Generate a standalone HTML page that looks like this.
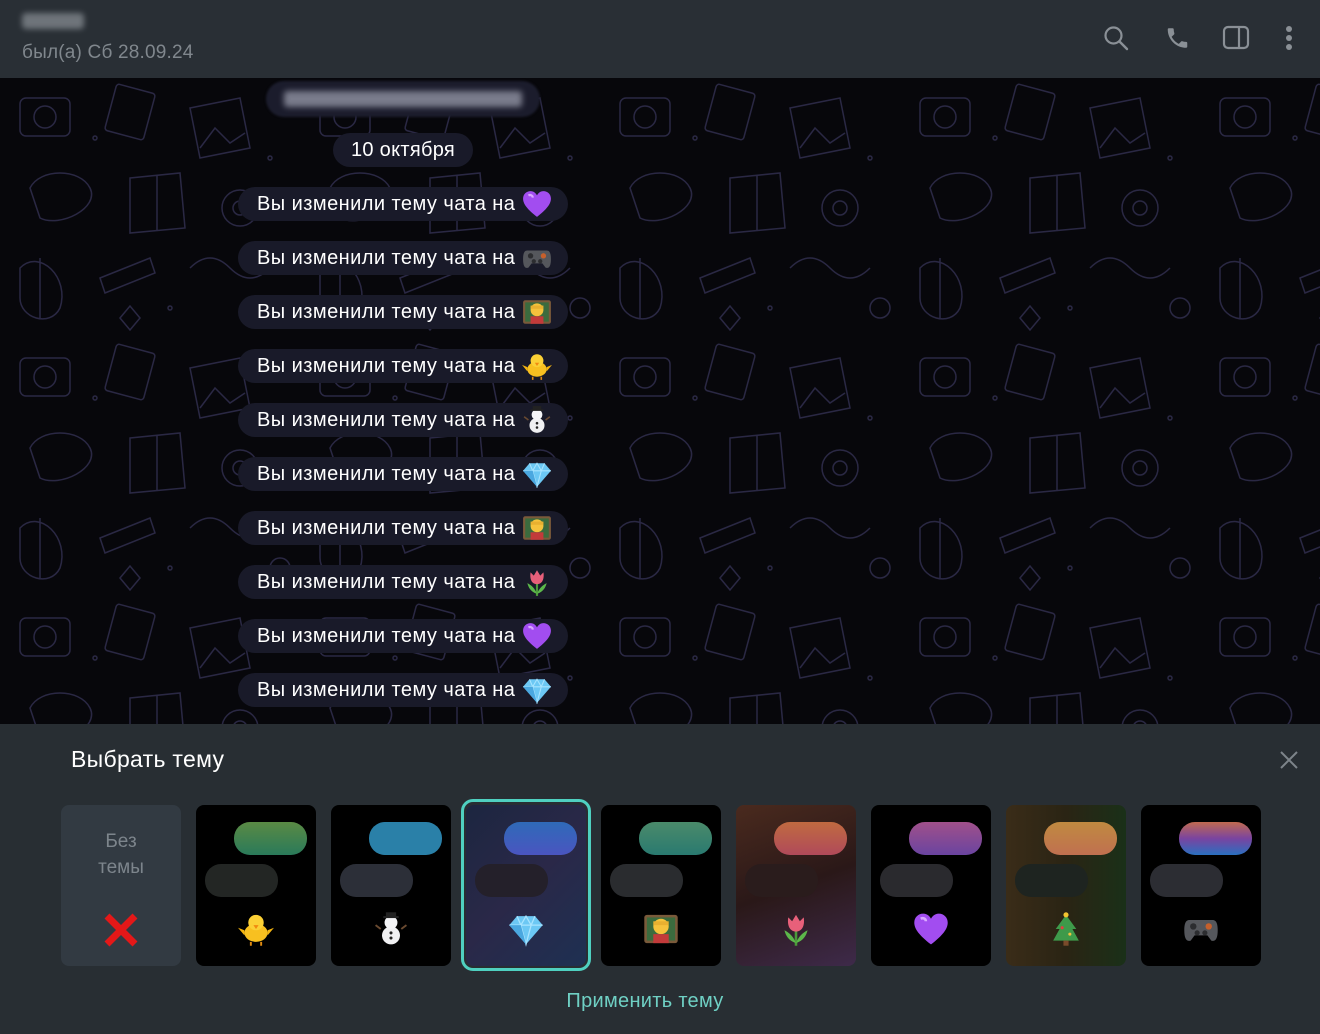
<!DOCTYPE html>
<html><head><meta charset="utf-8"><style>
*{margin:0;padding:0;box-sizing:border-box}
body{width:1320px;height:1034px;overflow:hidden;background:#282e33;font-family:"Liberation Sans","DejaVu Sans",sans-serif;position:relative}
.hdr{position:absolute;left:0;top:0;width:1320px;height:78px;background:#292f35}
.name{position:absolute;left:22px;top:13px;width:62px;height:16px;background:#80868c;filter:blur(3px);border-radius:4px;opacity:.8}
.status{position:absolute;left:22px;top:42px;color:#80878d;font-size:19px;letter-spacing:.2px}
.chat{position:absolute;left:0;top:78px;width:1320px;height:646px;background:#07070b;overflow:hidden}
.pill{position:absolute;left:238px;width:330px;height:34px;border-radius:17px;background:#191a29;color:#fff;font-size:20px;letter-spacing:.45px;line-height:34px;padding-left:19px}
.pill svg{position:absolute;left:284px;top:3px;width:30px;height:28px}
.date{position:absolute;left:333px;top:133px;width:140px;height:34px;border-radius:17px;background:#191a29;color:#fff;font-size:20px;letter-spacing:.3px;line-height:34px;text-align:center}
.blurp{position:absolute;left:266px;top:81px;width:274px;height:36px;border-radius:18px;background:#1b1c2c;filter:blur(1px)}
.blurp i{position:absolute;left:18px;top:10px;width:238px;height:16px;background:#7a7c8c;filter:blur(3px);border-radius:3px}
.panel{position:absolute;left:0;top:724px;width:1320px;height:310px;background:#282e33}
.title{position:absolute;left:71px;top:746px;color:#fff;font-size:23px;letter-spacing:.3px}
.card{position:absolute;top:805px;width:120px;height:161px;border-radius:8px;background:#000;overflow:hidden}
.card .a{position:absolute;left:38px;top:17px;width:73px;height:33px;border-radius:16px}
.card .b{position:absolute;left:9px;top:59px;width:73px;height:33px;border-radius:16px;background:#2a2b2e}
.card svg.e{position:absolute;left:42px;top:106px;width:36px;height:36px}
.sel{position:absolute;left:461px;top:799px;width:130px;height:172px;border:3px solid #4fd0c0;border-radius:12px}
.apply{position:absolute;left:0;width:1290px;top:990px;text-align:center;color:#6fd0c4;font-size:20px;letter-spacing:.3px}
</style></head><body>
<svg width="0" height="0" style="position:absolute">
<defs>
<symbol id="heart" viewBox="0 0 28 26"><path d="M14 25 C5 18 1 13 1 8 C1 4 4 1 8 1 C11 1 13 3 14 5 C15 3 17 1 20 1 C24 1 27 4 27 8 C27 13 23 18 14 25Z" fill="#a24df0"/><path d="M6 5 C8 4 10 5 10 7" stroke="#d9a9ff" stroke-width="2" fill="none"/></symbol>
<symbol id="pad" viewBox="0 0 28 26"><path d="M5 6 H23 C26 6 27 9 27 14 C27 21 25 23 22 22 L19 18 H9 L6 22 C3 23 1 21 1 14 C1 9 2 6 5 6Z" fill="#55575c"/><circle cx="8" cy="11" r="2.5" fill="#2c2d30"/><circle cx="20" cy="11" r="2.5" fill="#c6602c"/><circle cx="11" cy="16" r="2" fill="#2c2d30"/><circle cx="17" cy="16" r="2" fill="#2c2d30"/></symbol>
<symbol id="teach" viewBox="0 0 28 26"><rect x="1" y="2" width="26" height="22" rx="2" fill="#7a5a3a"/><rect x="3" y="4" width="22" height="18" fill="#3b6b3e"/><circle cx="14" cy="11" r="6" fill="#f5c23c"/><rect x="8" y="7" width="12" height="3" fill="#e8b030"/><rect x="8" y="17" width="12" height="7" fill="#c23a3a"/></symbol>
<symbol id="chick" viewBox="0 0 28 26"><ellipse cx="14" cy="16" rx="9" ry="7" fill="#f8c020"/><circle cx="14" cy="8" r="6" fill="#fbd035"/><path d="M5 14 L0 12 L5 18Z M23 14 L28 12 L23 18Z" fill="#f4b410"/><path d="M12 10 L16 10 L14 13Z" fill="#f08a10"/><path d="M10 23 V26 M18 23 V26" stroke="#e08a10" stroke-width="1.5"/></symbol>
<symbol id="snow" viewBox="0 0 28 26"><circle cx="14" cy="18" r="7" fill="#f0f0f2"/><circle cx="14" cy="8" r="5" fill="#f4f4f6"/><rect x="10" y="0" width="8" height="4" fill="#222"/><rect x="8" y="3" width="12" height="1.5" fill="#222"/><circle cx="14" cy="16" r="1.2" fill="#222"/><circle cx="14" cy="20" r="1.2" fill="#222"/><path d="M6 13 L2 10 M22 13 L26 10" stroke="#6a4a30" stroke-width="1.5"/></symbol>
<symbol id="dia" viewBox="0 0 28 26"><path d="M7 3 H21 L27 10 L14 25 L1 10Z" fill="#6cc8f4"/><path d="M1 10 H27 M7 3 L10 10 L14 25 L18 10 L21 3 M10 10 L14 3 L18 10" stroke="#a8e4ff" stroke-width="1" fill="none"/><path d="M1 10 L14 25 L10 10Z" fill="#4aa8e0"/></symbol>
<symbol id="tulip" viewBox="0 0 28 26"><path d="M14 14 V26" stroke="#4a9a3a" stroke-width="2"/><path d="M14 24 C8 22 6 18 5 14 C9 16 12 19 14 24Z M14 24 C20 22 22 18 23 14 C19 16 16 19 14 24Z" fill="#5cb84a"/><path d="M8 4 L11 7 L14 2 L17 7 L20 4 C21 10 19 15 14 15 C9 15 7 10 8 4Z" fill="#e8607a"/></symbol>
<symbol id="tree" viewBox="0 0 28 26"><path d="M14 2 L6 13 H9 L4 22 H24 L19 13 H22Z" fill="#3e9a4a"/><rect x="12" y="22" width="4" height="4" fill="#7a4a2a"/><circle cx="14" cy="2" r="2" fill="#f4c430"/><circle cx="11" cy="12" r="1.2" fill="#e04040"/><circle cx="17" cy="17" r="1.2" fill="#f0c040"/></symbol>
<pattern id="doodle" width="300" height="260" patternUnits="userSpaceOnUse">
<g fill="none" stroke="#2a2844" stroke-width="1.5">
<rect x="20" y="20" width="50" height="38" rx="6"/><circle cx="45" cy="39" r="11"/>
<rect x="110" y="10" width="40" height="48" rx="3" transform="rotate(15 130 34)"/>
<path d="M190 30 L240 20 L250 70 L200 80Z"/><path d="M200 70 L215 50 L230 65 L245 55"/>
<path d="M30 110 C40 90 80 90 90 110 C100 130 60 150 40 140Z"/>
<path d="M130 100 L180 95 L185 150 L130 155Z M157 97 L157 153"/>
<circle cx="240" cy="130" r="18"/><circle cx="240" cy="130" r="7"/>
<path d="M20 190 C40 170 70 200 60 230 C50 250 20 240 20 220Z M40 180 L40 240"/>
<path d="M100 200 L150 180 L155 195 L105 215Z"/>
<path d="M190 190 Q210 170 230 190 T270 190"/><circle cx="280" cy="230" r="10"/>
<path d="M120 240 L130 228 L140 240 L130 252Z"/>
<circle cx="95" cy="60" r="2"/><circle cx="270" cy="80" r="2"/><circle cx="170" cy="230" r="2"/>
</g></pattern>
</defs></svg>

<div class="hdr">
<div class="name"></div>
<div class="status">был(а) Сб 28.09.24</div>
<svg style="position:absolute;left:1103px;top:25px" width="26" height="26" viewBox="0 0 26 26"><circle cx="10.5" cy="10.5" r="8" fill="none" stroke="#8a9096" stroke-width="2.2"/><path d="M16.5 16.5 L24 24" stroke="#8a9096" stroke-width="2.4" stroke-linecap="round"/></svg>
<svg style="position:absolute;left:1164px;top:25px" width="27" height="26" viewBox="0 0 24 24"><path d="M6.6 10.8c1.4 2.8 3.8 5.1 6.6 6.6l2.2-2.2c.3-.3.7-.4 1-.2 1.1.4 2.3.6 3.6.6.6 0 1 .4 1 1V20c0 .6-.4 1-1 1C10.6 21 3 13.4 3 4c0-.6.4-1 1-1h3.5c.6 0 1 .4 1 1 0 1.3.2 2.5.6 3.6.1.3 0 .7-.2 1z" fill="#8a9096"/></svg>
<svg style="position:absolute;left:1222px;top:25px" width="28" height="25" viewBox="0 0 28 25"><rect x="2" y="2" width="24" height="21" rx="4" fill="none" stroke="#8a9096" stroke-width="2.2"/><path d="M17 2 V23" stroke="#8a9096" stroke-width="2.2"/></svg>
<svg style="position:absolute;left:1282px;top:24px" width="14" height="28"><circle cx="7" cy="5" r="3" fill="#8a9096"/><circle cx="7" cy="14" r="3" fill="#8a9096"/><circle cx="7" cy="23" r="3" fill="#8a9096"/></svg>
</div>

<div class="chat">
<svg width="1320" height="646" style="position:absolute;left:0;top:0"><rect width="1320" height="646" fill="url(#doodle)"/></svg>
</div>
<div class="blurp"><i></i></div>
<div class="date">10 октября</div>
<div class="pill" style="top:187px">Вы изменили тему чата на <svg><use href="#heart"/></svg></div>
<div class="pill" style="top:241px">Вы изменили тему чата на <svg><use href="#pad"/></svg></div>
<div class="pill" style="top:295px">Вы изменили тему чата на <svg><use href="#teach"/></svg></div>
<div class="pill" style="top:349px">Вы изменили тему чата на <svg><use href="#chick"/></svg></div>
<div class="pill" style="top:403px">Вы изменили тему чата на <svg><use href="#snow"/></svg></div>
<div class="pill" style="top:457px">Вы изменили тему чата на <svg><use href="#dia"/></svg></div>
<div class="pill" style="top:511px">Вы изменили тему чата на <svg><use href="#teach"/></svg></div>
<div class="pill" style="top:565px">Вы изменили тему чата на <svg><use href="#tulip"/></svg></div>
<div class="pill" style="top:619px">Вы изменили тему чата на <svg><use href="#heart"/></svg></div>
<div class="pill" style="top:673px">Вы изменили тему чата на <svg><use href="#dia"/></svg></div>

<div class="panel"></div>
<div class="title">Выбрать тему</div>
<svg style="position:absolute;left:1280px;top:751px" width="18" height="18"><path d="M1 1 L17 17 M17 1 L1 17" stroke="#7d848a" stroke-width="2"/></svg>

<div class="card" style="left:61px;background:#323a42">
<div style="position:absolute;left:0;width:120px;top:24px;text-align:center;color:#7d858c;font-size:19px;line-height:26px">Без<br>темы</div>
<svg style="position:absolute;left:42px;top:107px" width="36" height="36"><path d="M4 4 L32 32 M32 4 L4 32" stroke="#e41818" stroke-width="7"/></svg>
</div>
<div class="card" style="left:196px"><div class="a" style="background:linear-gradient(#5a8a44,#2a7a5a)"></div><div class="b" style="background:#232624"></div><svg class="e"><use href="#chick"/></svg></div>
<div class="card" style="left:331px"><div class="a" style="background:#2a80a8"></div><div class="b" style="background:#2c2f38"></div><svg class="e"><use href="#snow"/></svg></div>
<div class="card" style="left:466px;background:linear-gradient(135deg,#1c2640,#2a2848 50%,#1e3052)"><div class="a" style="background:linear-gradient(#2f6ab8,#4a55c0)"></div><div class="b" style="background:#24202a"></div><svg class="e"><use href="#dia"/></svg></div>
<div class="sel"></div>
<div class="card" style="left:601px"><div class="a" style="background:linear-gradient(#4a8a6a,#2a7a70)"></div><div class="b" style="background:#2a2c2f"></div><svg class="e"><use href="#teach"/></svg></div>
<div class="card" style="left:736px;background:linear-gradient(160deg,#4a2a1e,#2a1818 50%,#3e2a4a)"><div class="a" style="background:linear-gradient(#c06a40,#b04a5a)"></div><div class="b" style="background:#2a1c1c"></div><svg class="e"><use href="#tulip"/></svg></div>
<div class="card" style="left:871px"><div class="a" style="background:linear-gradient(#a0508a,#6a44a0)"></div><div class="b" style="background:#2a2a2e"></div><svg class="e"><use href="#heart"/></svg></div>
<div class="card" style="left:1006px;background:linear-gradient(90deg,#3a2c18,#2a2414 50%,#1a3018)"><div class="a" style="background:linear-gradient(#c08a40,#c07050)"></div><div class="b" style="background:#1e2420"></div><svg class="e"><use href="#tree"/></svg></div>
<div class="card" style="left:1141px"><div class="a" style="background:linear-gradient(#c06a50,#7a44a0 50%,#2a70c0)"></div><div class="b" style="background:#2c2d33"></div><svg class="e"><use href="#pad"/></svg></div>

<div class="apply">Применить тему</div>
</body></html>
